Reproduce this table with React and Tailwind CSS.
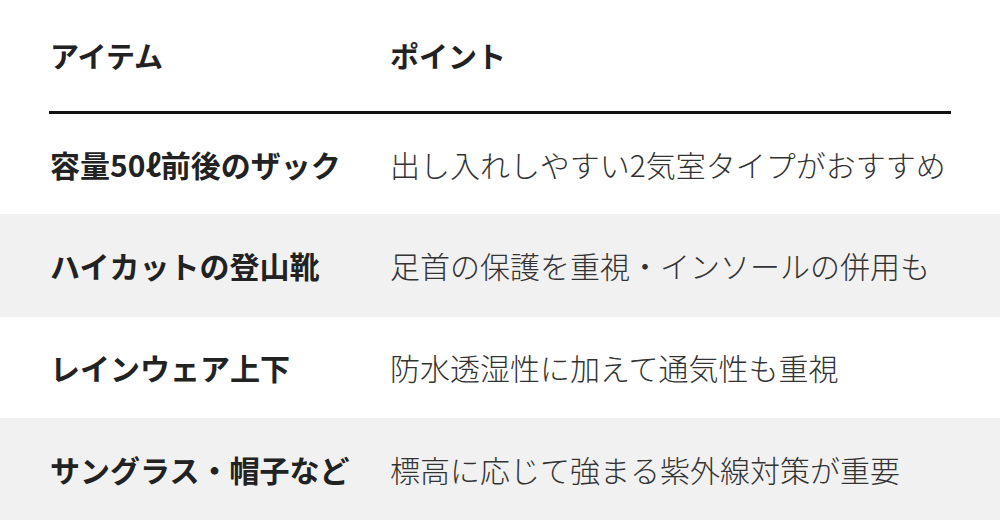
import React from 'react';

const rows = [
  { item: '容量50ℓ前後のザック', point: '出し入れしやすい2気室タイプがおすすめ', bg: 'bg-white', h: 'h-[100px]' },
  { item: 'ハイカットの登山靴', point: '足首の保護を重視・インソールの併用も', bg: 'bg-[#f1f1f1]', h: 'h-[103px]' },
  { item: 'レインウェア上下', point: '防水透湿性に加えて通気性も重視', bg: 'bg-white', h: 'h-[101px]' },
  { item: 'サングラス・帽子など', point: '標高に応じて強まる紫外線対策が重要', bg: 'bg-[#f1f1f1]', h: 'h-[102px]' },
];

export default function App() {
  return (
    <div
      className="w-[1000px] h-[532px] bg-white text-[#222] overflow-hidden"
      style={{ fontFamily: '"Noto Sans CJK JP", "Noto Sans", sans-serif' }}
    >
      <div className="h-[111px] flex items-center px-[50px] text-[29px] font-bold">
        <div className="w-[340px]">アイテム</div>
        <div>ポイント</div>
      </div>
      <div className="mx-[49px] h-[3px] bg-[#111]" />
      {rows.map((r) => (
        <div key={r.item} className={`${r.bg} ${r.h} flex items-center px-[50px] text-[30px]`}>
          <div className="w-[340px] font-bold whitespace-nowrap">{r.item}</div>
          <div className="text-[#333] font-light whitespace-nowrap">{r.point}</div>
        </div>
      ))}
    </div>
  );
}
